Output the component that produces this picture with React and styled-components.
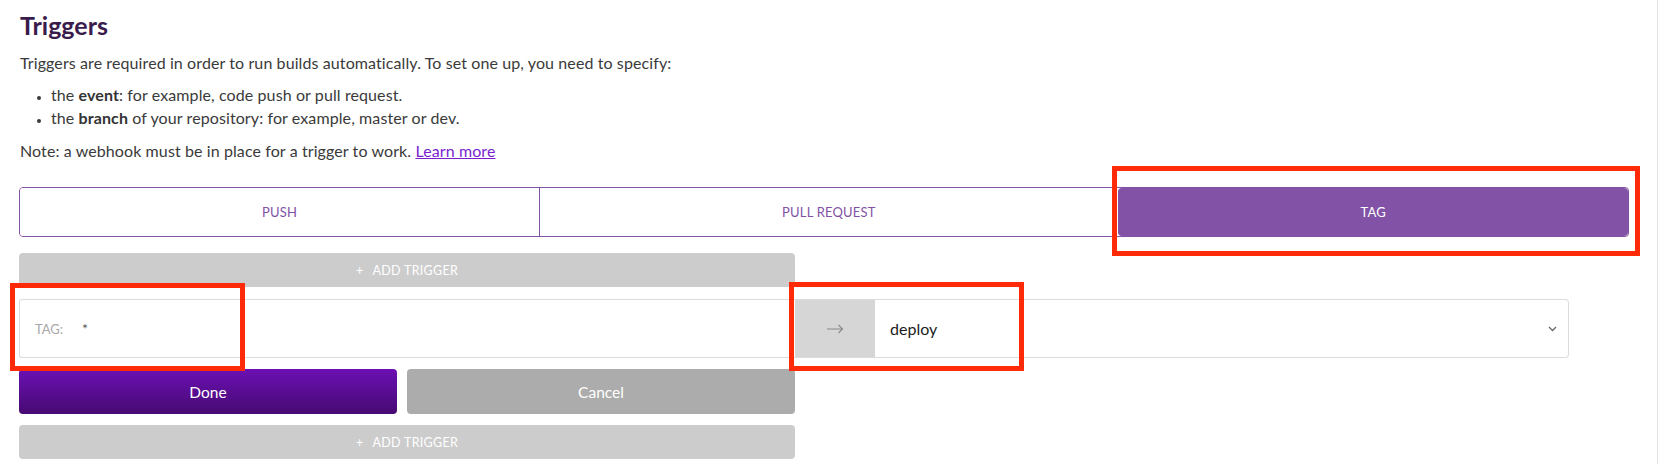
import React from "react";
import styled, { createGlobalStyle } from "styled-components";

const GlobalStyle = createGlobalStyle`
  html, body {
    margin: 0;
    padding: 0;
    background: #fff;
  }
  body {
    font-family: Lato, "Liberation Sans", sans-serif;
    color: #333;
  }
`;

const Page = styled.div`
  position: relative;
  box-sizing: border-box;
  width: 1658px;
  min-height: 464px;
  padding: 10px 28px 0 19px;
  border-right: 1px solid #e4e4e4;
  background: #fff;
`;

const Title = styled.h2`
  margin: 0 0 0 1px;
  font-size: 25px;
  line-height: 30px;
  font-weight: 700;
  color: #3a1c4c;
`;

const Text = styled.p`
  margin: ${(p) => p.$mt || 0}px 0 0 1px;
  font-size: 16px;
  letter-spacing: 0.1px;
  line-height: 23px;
  color: #3a3a3a;
`;

const List = styled.ul`
  margin: 9px 0 0;
  padding-left: 32px;
  font-size: 16px;
  letter-spacing: 0.1px;
  line-height: 23px;
  color: #3a3a3a;

  li::marker {
    font-size: 11px;
  }

  b {
    font-weight: 700;
    color: #333;
  }
`;

const Link = styled.a`
  color: #7a1fd0;
  text-decoration: underline;
  cursor: pointer;
`;

const Tabs = styled.div`
  display: flex;
  margin-top: 25px;
  height: 50px;
  box-sizing: border-box;
  border: 1px solid #8152a5;
  border-radius: 4px;
  overflow: hidden;
`;

const Tab = styled.button`
  flex: 1 1 auto;
  border: 0;
  border-left: ${(p) => (p.$first ? "0" : "1px solid #8152a5")};
  margin: 0;
  padding: 0;
  background: ${(p) => (p.$active ? "#8152a5" : "#fff")};
  color: ${(p) => (p.$active ? "#fff" : "#8152a5")};
  font-family: Lato, "Liberation Sans", sans-serif;
  font-size: 13px;
  letter-spacing: 0.2px;
  text-transform: uppercase;
  border-radius: ${(p) => (p.$active ? "4px" : "0")};
`;

const Form = styled.div`
  width: 1550px;
  margin-top: 16px;
`;

const Half = styled.div`
  width: 776px;
`;

const AddBar = styled.div`
  display: flex;
  align-items: center;
  justify-content: center;
  gap: 9px;
  height: 34px;
  margin-top: ${(p) => p.$mt || 0}px;
  border-radius: 4px;
  background: #cccccc;
  color: #fff;
  font-size: 12.5px;
  text-transform: uppercase;
  letter-spacing: 0.3px;
`;

const Row = styled.div`
  display: flex;
  height: 59px;
  margin-top: 12px;
`;

const TagInput = styled.div`
  flex: 0 0 776px;
  box-sizing: border-box;
  display: flex;
  align-items: center;
  padding-left: 15px;
  border: 1px solid #dcdcdc;
  border-right: 0;
  border-radius: 3px 0 0 3px;
  background: #fff;
`;

const TagLabel = styled.span`
  width: 47px;
  font-size: 13px;
  color: #a8a8a8;
  text-transform: uppercase;
`;

const TagValue = styled.span`
  font-size: 14px;
  color: #555;
`;

const ArrowBox = styled.div`
  flex: 0 0 80px;
  display: flex;
  align-items: center;
  justify-content: center;
  background: #d6d6d6;
  border-top: 1px solid #dcdcdc;
  border-bottom: 1px solid #dcdcdc;
  box-sizing: border-box;
`;

const Select = styled.div`
  flex: 1;
  box-sizing: border-box;
  display: flex;
  align-items: center;
  justify-content: space-between;
  padding: 0 11px 0 15px;
  border: 1px solid #dcdcdc;
  border-left: 0;
  border-radius: 0 4px 4px 0;
  font-size: 16px;
  color: #1d1d1d;
`;

const Buttons = styled.div`
  display: flex;
  margin-top: 11px;
`;

const Button = styled.button`
  flex: ${(p) => (p.$primary ? "0 0 378px" : "1")};
  margin-right: ${(p) => (p.$primary ? "10px" : "0")};
  height: 45px;
  border: 0;
  border-radius: 4px;
  font-family: Lato, "Liberation Sans", sans-serif;
  font-size: 15.5px;
  color: #fff;
  background: ${(p) =>
    p.$primary ? "linear-gradient(#6b10b4, #470a72)" : "#acacac"};
`;

const Mark = styled.div`
  position: absolute;
  box-sizing: border-box;
  left: ${(p) => p.$x}px;
  top: ${(p) => p.$y}px;
  width: ${(p) => p.$w}px;
  height: ${(p) => p.$h}px;
  border: 5px solid #fe2a08;
  pointer-events: none;
`;

const Arrow = () => (
  <svg width="17" height="10" viewBox="0 0 17 10" fill="none">
    <path d="M0 5h15.5M11.5 1l4 4-4 4" stroke="#8a8a8a" strokeWidth="1.1" />
  </svg>
);

const Chevron = () => (
  <svg width="9" height="6" viewBox="0 0 9 6" fill="none">
    <path d="M1 1l3.5 3.5L8 1" stroke="#666" strokeWidth="1.3" />
  </svg>
);

const tabs = ["Push", "Pull request", "Tag"];

const App = () => {
  return (
    <Page>
      <GlobalStyle />
      <Title>Triggers</Title>
      <Text $mt={11}>
        Triggers are required in order to run builds automatically. To set one
        up, you need to specify:
      </Text>
      <List>
        <li>
          the <b>event</b>: for example, code push or pull request.
        </li>
        <li>
          the <b>branch</b> of your repository: for example, master or dev.
        </li>
      </List>
      <Text $mt={10}>
        Note: a webhook must be in place for a trigger to work.{" "}
        <Link>Learn more</Link>
      </Text>

      <Tabs>
        {tabs.map((t, i) => (
          <Tab key={t} $first={i === 0} $active={t === "Tag"}>
            {t}
          </Tab>
        ))}
      </Tabs>

      <Form>
        <Half>
          <AddBar>
            <span>+</span>
            <span>Add trigger</span>
          </AddBar>
        </Half>
        <Row>
          <TagInput>
            <TagLabel>Tag:</TagLabel>
            <TagValue>*</TagValue>
          </TagInput>
          <ArrowBox>
            <Arrow />
          </ArrowBox>
          <Select>
            <span>deploy</span>
            <Chevron />
          </Select>
        </Row>
        <Half>
          <Buttons>
            <Button $primary>Done</Button>
            <Button>Cancel</Button>
          </Buttons>
          <AddBar $mt={11}>
            <span>+</span>
            <span>Add trigger</span>
          </AddBar>
        </Half>
      </Form>

      <Mark $x={1112} $y={166} $w={528} $h={90} />
      <Mark $x={10} $y={283} $w={235} $h={88} />
      <Mark $x={789} $y={282} $w={235} $h={89} />
    </Page>
  );
};

export default App;
